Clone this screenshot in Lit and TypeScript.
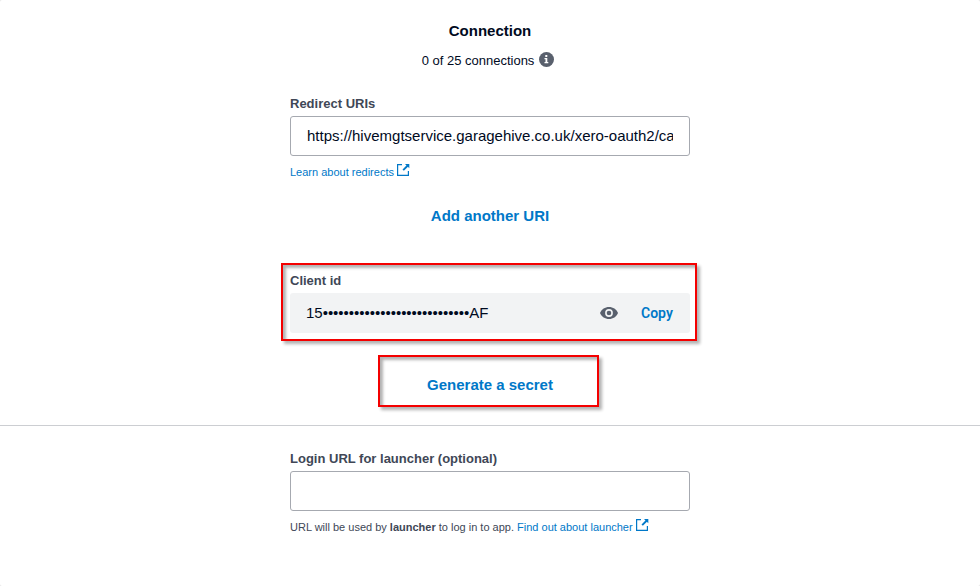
import { LitElement, html, css } from "lit";
import { customElement, property } from "lit/decorators.js";

@customElement("external-icon")
class ExternalIcon extends LitElement {
  static styles = css`
    :host { display: inline-block; width: 13px; height: 12px; }
    svg { display: block; }
  `;
  render() {
    return html`<svg width="13" height="12" viewBox="0 0 13 12">
      <path d="M5 .6H.6v10.800h10.800V7" fill="none" stroke="#0078c8" stroke-width="1.200" />
      <path d="M8 0h4.300v4.300z" fill="#0078c8" />
      <path d="M10.800 1.500L6.200 6.100" fill="none" stroke="#0078c8" stroke-width="1.900" />
    </svg>`;
  }
}

@customElement("text-field")
class TextField extends LitElement {
  @property() label = "";
  @property() value = "";
  static styles = css`
    :host { display: block; }
    .label { padding-top: 1px; font-size: 13px; line-height: 20px; font-weight: bold; color: #404756; margin-bottom: 2px; }
    .box { box-sizing: border-box; height: 40px; border: 1px solid #a6a9b0; border-radius: 3px; padding: 0 16px; background: #fff; }
    .value { font-size: 15px; line-height: 38px; color: #000a1e; white-space: nowrap; overflow: hidden; height: 38px; }
  `;
  render() {
    return html`<div class="label">${this.label}</div>
      <div class="box"><div class="value">${this.value}</div></div>`;
  }
}

@customElement("app-root")
class AppRoot extends LitElement {
  static styles = css`
    :host { display: block; height: 586px; background: #e4e4e4; overflow: hidden; font-family: "Liberation Sans", Arial, sans-serif; color: #000a1e; }
    .page { height: 586px; background: #fff; border-radius: 2px; overflow: hidden; }
    .connection { height: 425px; border-bottom: 1px solid #ccced2; }
    .column { width: 400px; margin: 0 auto; }
    .title { padding-top: 21px; font-size: 15px; line-height: 20px; font-weight: bold; text-align: center; }
    .count { display: flex; justify-content: center; align-items: center; gap: 5px; height: 20px; margin-top: 9px; font-size: 13px; padding-right: 4px; width: 400px; box-sizing: border-box; }
    .info { display: block; margin-top: -1px; }
    .redirects { margin-top: 23px; }
    .hint { display: flex; align-items: flex-start; margin-top: 8px; height: 16px; line-height: 16px; font-size: 11px; color: #404756; white-space: pre; }
    .link { color: #0078c8; }
    .hint external-icon { margin-left: 3px; }
    .button { font-size: 15px; line-height: 20px; font-weight: bold; text-align: center; color: #0078c8; }
    .add { margin-top: 26px; }
    .callout { box-sizing: border-box; border: 2px solid #f40000; box-shadow: 3px 3px 3px rgba(0,0,0,.3), inset 3px 3px 3px rgba(0,0,0,.3); }
    .client { width: 416px; height: 78px; margin: 37px 0 0 -9px; padding: 6px 5px 0 7px; }
    .label { font-size: 13px; line-height: 20px; font-weight: bold; color: #404756; margin-bottom: 2px; }
    .secret-box { display: flex; align-items: center; width: 400px; height: 40px; box-sizing: border-box; padding: 0 16px; border-radius: 3px; background: #f2f3f4; font-size: 15px; }
    .id { flex: 1; padding-bottom: 2px; white-space: nowrap; letter-spacing: -.02px; }
    .copy { width: 33px; padding-bottom: 1px; color: #0078c8; font-family: Roboto, "Liberation Sans", sans-serif; font-size: 14px; font-weight: 600; margin-left: 23px; }
    .eye { display: block; }
    .generate { width: 221px; height: 52px; margin: 14px 0 0 88px; padding-top: 18px; padding-left: 3px; }
    .launcher { padding-top: 22px; }
  `;
  render() {
    return html`<div class="page">
      <div class="connection"><div class="column">
        <div class="title">Connection</div>
        <div class="count"><span>0 of 25 connections</span>
          <svg class="info" width="15" height="15" viewBox="0 0 15 15"><circle cx="7.5" cy="7.5" r="7.5" fill="#59606d"/><path d="M6.300 3h2v2h-2zM5.500 6h2.800v4h1v1.300H5.500V10h1V7.300h-1z" fill="#fff"/></svg>
        </div>
        <text-field class="redirects" label="Redirect URIs" value="https://hivemgtservice.garagehive.co.uk/xero-oauth2/callback"></text-field>
        <div class="hint"><span class="link">Learn about redirects</span><external-icon></external-icon></div>
        <div class="button add">Add another URI</div>
        <div class="callout client">
          <div class="label">Client id</div>
          <div class="secret-box">
            <span class="id">15${"•".repeat(28)}AF</span>
            <svg class="eye" width="18" height="12" viewBox="0 0 18 12"><path d="M0 6C1.5 2.3 5 0 9 0s7.500 2.300 9 6c-1.500 3.700-5 6-9 6S1.500 9.700 0 6z" fill="#59606d"/><circle cx="9" cy="6" r="3.100" fill="none" stroke="#f2f3f4" stroke-width="1.600"/></svg>
            <span class="copy">Copy</span>
          </div>
        </div>
        <div class="callout generate button">Generate a secret</div>
      </div></div>
      <div class="column launcher">
        <text-field label="Login URL for launcher (optional)"></text-field>
        <div class="hint"><span>URL will be used by <b>launcher</b> to log in to app. <span class="link">Find out about launcher</span></span><external-icon></external-icon></div>
      </div>
    </div>`;
  }
}
